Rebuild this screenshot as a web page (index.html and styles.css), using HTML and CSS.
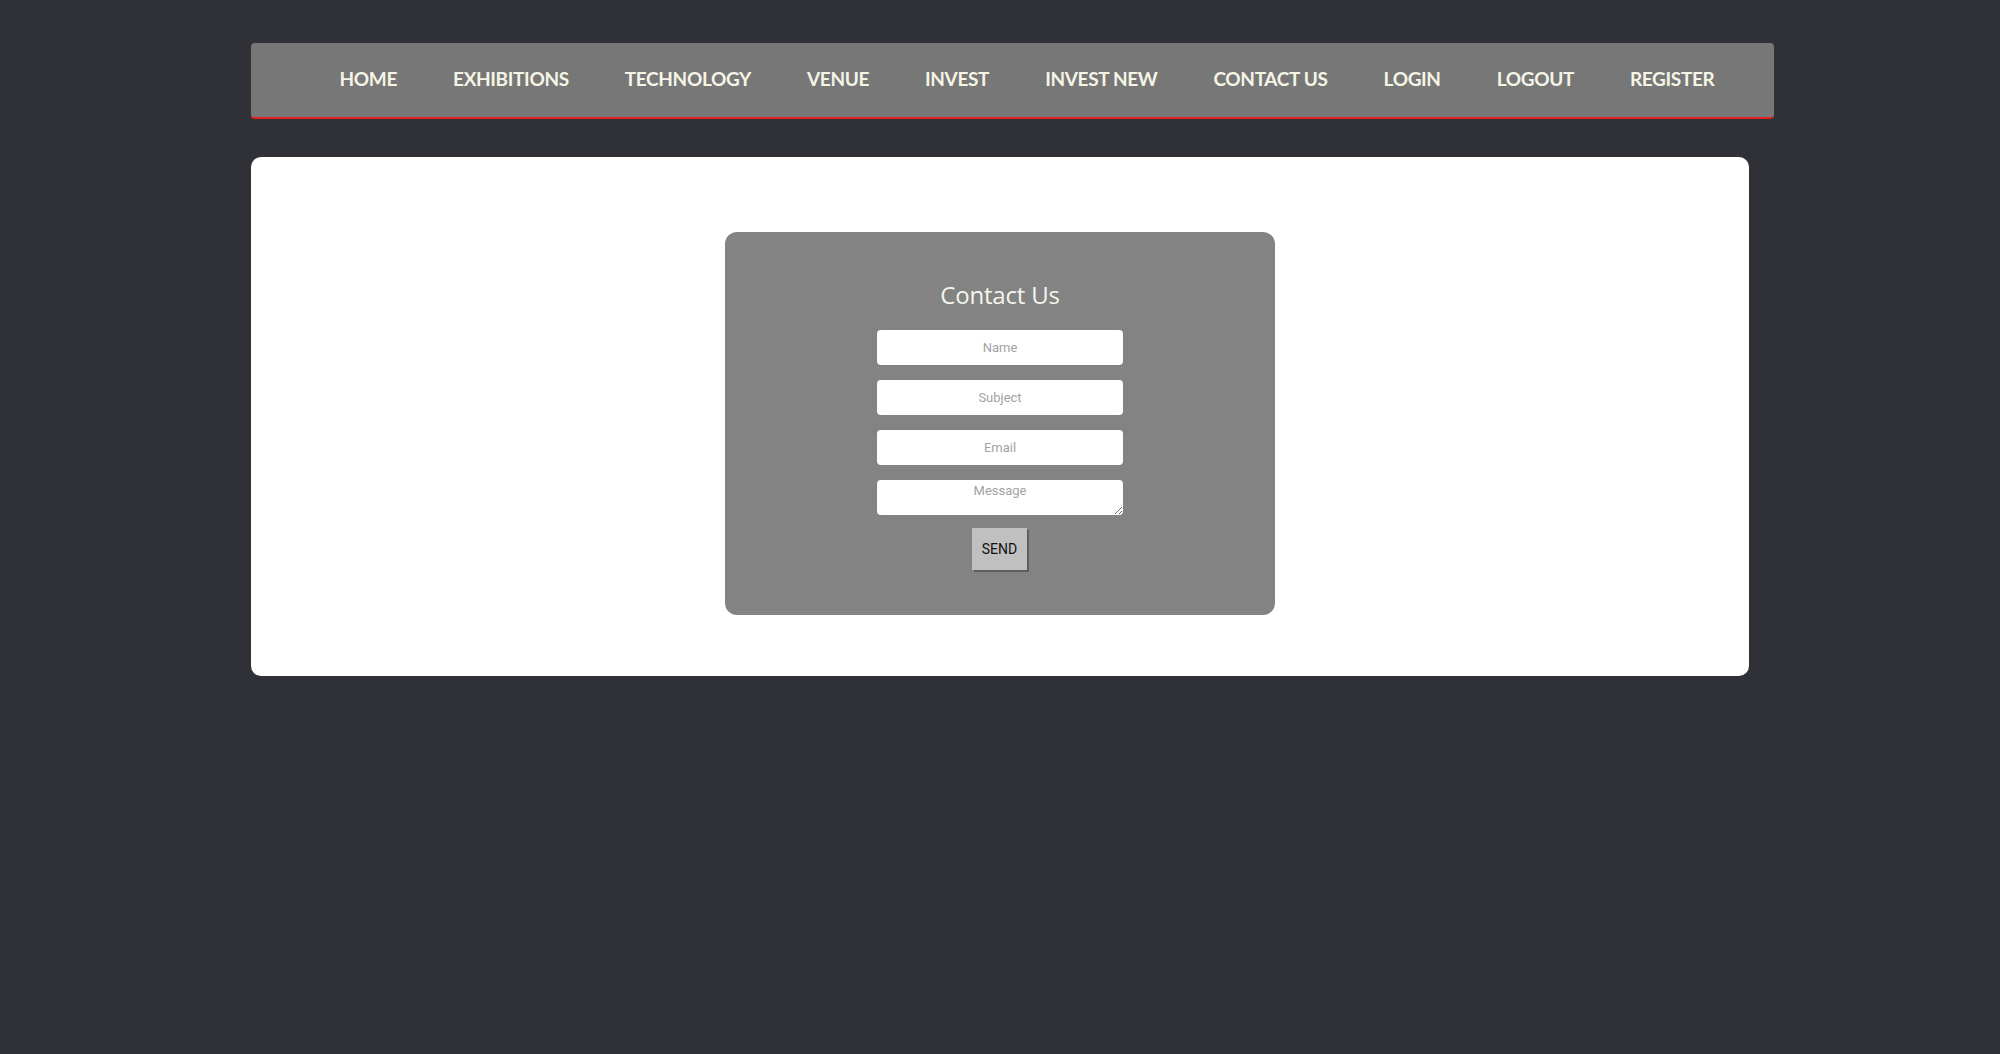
FILE: index.html
```html
<!DOCTYPE html>
<html lang="en">
<head>
<meta charset="utf-8">
<title>Contact Us</title>
<link rel="stylesheet" href="styles.css">
</head>
<body>
<div class="page">
  <nav class="topnav">
    <ul class="menu">
      <li><a href="#">Home</a></li>
      <li><a href="#">Exhibitions</a></li>
      <li><a href="#">Technology</a></li>
      <li><a href="#">Venue</a></li>
      <li><a href="#">Invest</a></li>
      <li><a href="#">Invest New</a></li>
      <li><a href="#">Contact Us</a></li>
      <li><a href="#">Login</a></li>
      <li><a href="#">Logout</a></li>
      <li><a href="#">Register</a></li>
    </ul>
  </nav>
  <main class="card">
    <form class="contact">
      <h2 class="contact-title">Contact Us</h2>
      <input class="field" type="text" placeholder="Name">
      <input class="field" type="text" placeholder="Subject">
      <input class="field" type="email" placeholder="Email">
      <textarea class="field field-msg" placeholder="Message"></textarea>
      <button class="send" type="button">SEND</button>
    </form>
  </main>
</div>
</body>
</html>
```
FILE: styles.css
```css
html, body {
  margin: 0;
  padding: 0;
  background: #2f3136;
  min-height: 100%;
}

body {
  font-family: "Lato", "Liberation Sans", sans-serif;
}

.page {
  width: 1498px;
  margin: 0 auto;
  padding-top: 43px;
}

.topnav {
  margin-right: -25px;
  height: 74px;
  background: #777777;
  border-bottom: 2px solid #e0231f;
  border-radius: 4px;
  display: flex;
  align-items: center;
}

.menu {
  list-style: none;
  margin: 0;
  padding: 0 0 4px 29px;
  flex: 1;
  display: flex;
  justify-content: center;
  gap: 0;
}

.menu li a {
  display: block;
  padding: 0 28px;
  color: #f5f5e6;
  text-decoration: none;
  text-transform: uppercase;
  font-weight: 700;
  font-size: 19px;
  letter-spacing: -0.35px;
}

.card {
  margin-top: 38px;
  background: #ffffff;
  border-radius: 10px;
  padding: 75px 0 61px;
  display: flex;
  justify-content: center;
}

.contact {
  width: 550px;
  height: 383px;
  box-sizing: border-box;
  background: #838383;
  border-radius: 12px;
  display: flex;
  flex-direction: column;
  align-items: center;
  padding-top: 48px;
}

.contact-title {
  margin: 0 0 20px;
  font-family: "Open Sans", "Noto Sans", sans-serif;
  font-weight: 400;
  font-size: 24px;
  line-height: 30px;
  color: #f5f5ec;
  letter-spacing: -0.2px;
}

.field {
  width: 246px;
  height: 35px;
  box-sizing: border-box;
  border: none;
  border-radius: 4px;
  background: #ffffff;
  margin: 0 0 15px;
  font-family: "Roboto", "Liberation Sans", sans-serif;
  font-size: 13px;
  text-align: center;
  color: #333;
  outline: none;
}

.field::placeholder {
  color: #a3a3a3;
}

.field-msg {
  display: block;
  resize: vertical;
  padding: 3px 4px 0;
  margin-bottom: 13px;
}

.send {
  width: 55px;
  height: 42px;
  border: none;
  background: #c0c0c0;
  box-shadow: 2px 2px 0 #5e5e5e;
  font-family: "Roboto", "Liberation Sans", sans-serif;
  font-size: 14px;
  color: #111;
  padding: 0;
  margin-left: -1px;
}
```
